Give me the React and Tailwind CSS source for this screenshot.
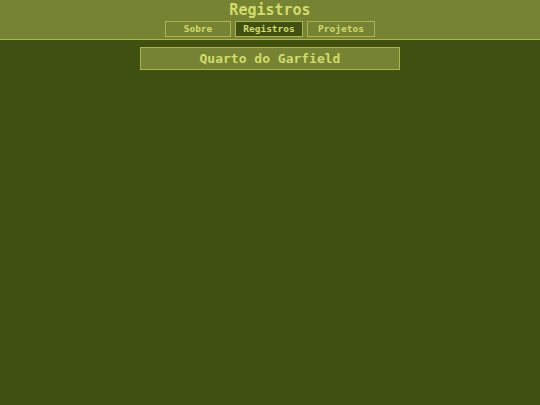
export default function App() {
  const mono = { fontFamily: '"DejaVu Sans Mono", "Liberation Mono", monospace' };
  return (
    <div className="w-[540px] h-[405px] bg-[#3f5011] flex flex-col" style={mono}>
      <header className="h-[40px] bg-[#758332] border-b border-[#a9b552] flex flex-col items-center">
        <h1 className="text-[15px] leading-[19px] font-bold text-[#d2dc6a] mt-[1px]">Registros</h1>
        <nav className="flex gap-[4px] mt-[1px]">
          <button className="w-[66px] h-[16px] border border-[#a9b552] text-[9.5px] leading-[14px] font-bold text-[#d2dc6a]">Sobre</button>
          <button className="w-[68px] h-[16px] border border-[#a9b552] bg-[#3f5011] text-[9.5px] leading-[14px] font-bold text-[#d2dc6a]">Registros</button>
          <button className="w-[68px] h-[16px] border border-[#a9b552] text-[9.5px] leading-[14px] font-bold text-[#d2dc6a]">Projetos</button>
        </nav>
      </header>
      <main className="flex justify-center pt-[7px]">
        <div className="w-[260px] h-[23px] bg-[#758332] border border-[#a9b552] flex items-center justify-center text-[13px] font-bold text-[#d2dc6a]">
          Quarto do Garfield
        </div>
      </main>
    </div>
  );
}
